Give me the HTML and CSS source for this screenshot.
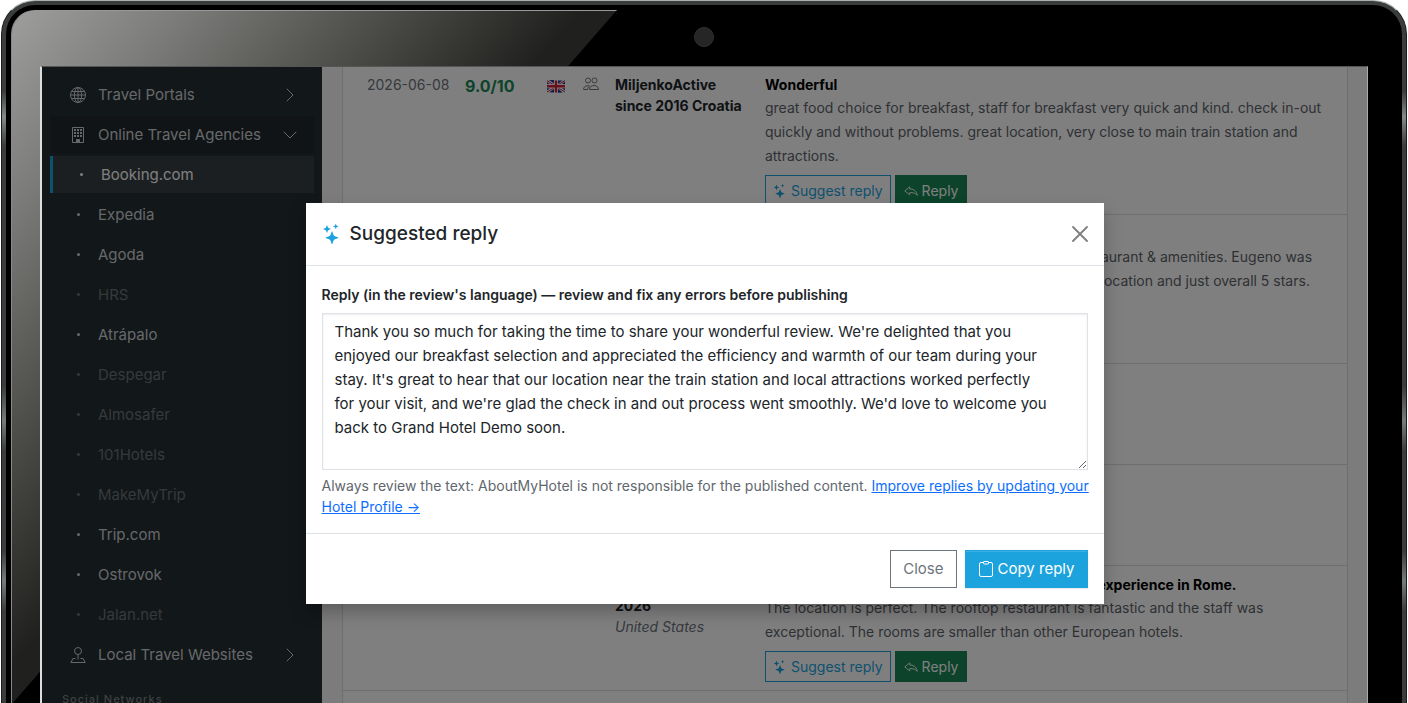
FILE: index.html
```html
<!DOCTYPE html>
<html lang="en">
<head>
<meta charset="utf-8">
<title>Suggested reply</title>
<link rel="stylesheet" href="styles.css">
</head>
<body>
<svg class="sprite" aria-hidden="true">
  <symbol id="stars" viewBox="0 0 16 16"><path fill="currentColor" d="M7.657 6.247c.11-.33.576-.33.686 0l.645 1.937a2.89 2.89 0 0 0 1.829 1.828l1.936.645c.33.11.33.576 0 .686l-1.937.645a2.89 2.89 0 0 0-1.828 1.829l-.645 1.936a.361.361 0 0 1-.686 0l-.645-1.937a2.89 2.89 0 0 0-1.828-1.828l-1.937-.645a.361.361 0 0 1 0-.686l1.937-.645a2.89 2.89 0 0 0 1.828-1.828zM3.794 1.148a.217.217 0 0 1 .412 0l.387 1.162c.173.518.579.924 1.097 1.097l1.162.387a.217.217 0 0 1 0 .412l-1.162.387A1.73 1.73 0 0 0 4.593 5.69l-.387 1.162a.217.217 0 0 1-.412 0L3.407 5.69A1.73 1.73 0 0 0 2.31 4.593l-1.162-.387a.217.217 0 0 1 0-.412l1.162-.387A1.73 1.73 0 0 0 3.407 2.31zM10.863.099a.145.145 0 0 1 .274 0l.258.774c.115.346.386.617.732.732l.774.258a.145.145 0 0 1 0 .274l-.774.258a1.16 1.16 0 0 0-.732.732l-.258.774a.145.145 0 0 1-.274 0l-.258-.774a1.16 1.16 0 0 0-.732-.732L9.1 2.137a.145.145 0 0 1 0-.274l.774-.258c.346-.115.617-.386.732-.732z"/></symbol>
  <symbol id="back" viewBox="0 0 16 16"><path fill="none" stroke="currentColor" stroke-linejoin="round" d="M6.6 3.2v2.6c3 0 7.400.6 8.600 7.200-2-2.600-5-3.400-8.600-3.200v2.600L.9 8z"/></symbol>
  <symbol id="right" viewBox="0 0 16 16"><path fill="none" stroke="currentColor" stroke-linecap="round" stroke-linejoin="round" d="M5 2l6 6-6 6"/></symbol>
  <symbol id="down" viewBox="0 0 16 16"><path fill="none" stroke="currentColor" stroke-linecap="round" stroke-linejoin="round" d="M2 5l6 6 6-6"/></symbol>
</svg>
<div class="tablet">
  <div class="bezel">
    <div class="gloss"></div>
    <div class="bezel-top"><span class="camera"></span></div>
    <div class="screen">
      <nav class="sidebar">
        <a class="item" href="#"><svg class="icon" viewBox="0 0 16 16"><g fill="none" stroke="currentColor"><circle cx="8" cy="8" r="7.500"/><ellipse cx="8" cy="8" rx="3.600" ry="7.500"/><path d="M8 .5v15M.5 8h15M1.600 4.500h12.800M1.600 11.500h12.800"/></g></svg><span class="label">Travel Portals</span><svg class="icon"><use href="#right"/></svg></a>
        <a class="item open" href="#"><svg class="icon" viewBox="0 0 16 16"><path fill="none" stroke="currentColor" d="M2.500.5h11v15h-11zM6.500 15.500v-3h3v3"/><path fill="currentColor" d="M4 2h2v2H4zM7 2h2v2H7zM10 2h2v2h-2zM4 5h2v2H4zM7 5h2v2H7zM10 5h2v2h-2zM4 8h2v2H4zM7 8h2v2H7zM10 8h2v2h-2zM6.500 12.500h3v3h-3z"/></svg><span class="label">Online Travel Agencies</span><svg class="icon"><use href="#down"/></svg></a>
        <a class="item active" href="#"><span class="dot"></span>Booking.com</a>
        <a class="item" href="#"><span class="dot"></span>Expedia</a>
        <a class="item" href="#"><span class="dot"></span>Agoda</a>
        <a class="item muted" href="#"><span class="dot"></span>HRS</a>
        <a class="item" href="#"><span class="dot"></span>Atrápalo</a>
        <a class="item muted" href="#"><span class="dot"></span>Despegar</a>
        <a class="item muted" href="#"><span class="dot"></span>Almosafer</a>
        <a class="item muted" href="#"><span class="dot"></span>101Hotels</a>
        <a class="item muted" href="#"><span class="dot"></span>MakeMyTrip</a>
        <a class="item" href="#"><span class="dot"></span>Trip.com</a>
        <a class="item" href="#"><span class="dot"></span>Ostrovok</a>
        <a class="item muted" href="#"><span class="dot"></span>Jalan.net</a>
        <a class="item" href="#"><svg class="icon" viewBox="0 0 16 16"><g fill="none" stroke="currentColor"><circle cx="8" cy="4" r="3.500"/><path d="M8 7.500v5M5.500 11.500H3L.8 15.500h14.400L13 11.500h-2.500"/></g></svg><span class="label">Local Travel Websites</span><svg class="icon"><use href="#right"/></svg></a>
        <div class="section">Social Networks</div>
      </nav>
      <main class="content">
        <table class="reviews">
          <colgroup><col class="c-date"><col class="c-score"><col class="c-flag"><col class="c-type"><col class="c-name"><col></colgroup>
          <tbody>
          <tr>
            <td class="date">2026-06-08</td>
            <td class="score">9.0/10</td>
            <td><svg class="flag" viewBox="0 0 20 16" role="img" aria-label="United Kingdom"><path fill="#fff" d="M1 2.500q4-1.500 9 0t9-.5v12q-4 1.500-9 .5t-9 0z"/><path fill="#1f3f94" d="M3 2l5 3.500V2zM12 2.600l4.500 0-4.500 3.200zM1 4l3 2.300H1zM19 3.600V6.300h-3.500zM1 10h3.200L1 12.500zM19 10v2.600L15.800 10zM8 14.400v-3.600l-4.800 3.400zM12 14.800v-4l4.800 3.800z"/><path stroke="#d2203a" d="M1 2.700l6.500 4M19 2.500l-6.500 4M1 14l6.500-4M19 14l-6.500-4"/><path stroke="#fff" stroke-width="4" d="M1 8.300h18M10 2.500v12"/><path stroke="#d2203a" stroke-width="2.400" d="M1 8.300h18M10 2.500v12"/></svg></td>
            <td><svg class="people" viewBox="0 0 16 16" role="img" aria-label="Couple"><g fill="none" stroke="currentColor"><circle cx="5" cy="4.500" r="2.500"/><circle cx="11.500" cy="4.500" r="2.500"/><path d="M6.500 13.500c0-2.500 2-4 4.500-4s4.500 1.500 4.500 4zM6.500 10C3 9 .5 11 .5 13.500h4.200c0-1.500.5-2.500 1.800-3.500"/></g></svg></td>
            <td class="name"><strong>MiljenkoActive since 2016 Croatia</strong></td>
            <td class="review"><h2>Wonderful</h2><p>great food choice for breakfast, staff for breakfast very quick and kind. check in-out quickly and without problems. great location, very close to main train station and attractions.</p>
              <div class="actions"><button class="btn-sm suggest"><svg><use href="#stars"/></svg>Suggest reply</button><button class="btn-sm reply"><svg><use href="#back"/></svg>Reply</button></div></td>
          </tr>
          <tr class="tall">
            <td></td><td></td><td></td><td></td><td></td>
            <td class="review"><h2>Five stars</h2><p class="keep-lines">Beautiful hotel and lovely rooms with a perfect restaurant &amp; amenities. Eugeno was<br>so helpful, friendly and welcoming to us. Excellent location and just overall 5 stars.</p></td>
          </tr>
          <tr class="short"><td></td><td></td><td></td><td></td><td></td><td></td></tr>
          <tr class="short"><td></td><td></td><td></td><td></td><td></td><td></td></tr>
          <tr>
            <td></td><td></td><td></td><td></td>
            <td class="name"><strong>Active since<br>2026</strong><br><em>United States</em></td>
            <td class="review"><h2>A truly wonderful hotel with a view and a superb experience in Rome.</h2><p>The location is perfect. The rooftop restaurant is fantastic and the staff was exceptional. The rooms are smaller than other European hotels.</p>
              <div class="actions"><button class="btn-sm suggest"><svg><use href="#stars"/></svg>Suggest reply</button><button class="btn-sm reply"><svg><use href="#back"/></svg>Reply</button></div></td>
          </tr>
          <tr class="short"><td></td><td></td><td></td><td></td><td></td><td></td></tr>
          </tbody>
        </table>
      </main>
      <div class="backdrop">
        <section class="modal" role="dialog" aria-labelledby="modal-title">
          <header class="modal-header">
            <svg class="spark"><use href="#stars"/></svg>
            <h1 id="modal-title">Suggested reply</h1>
            <button class="close" aria-label="Close dialog"><svg viewBox="0 0 16 16"><path fill="none" stroke="currentColor" stroke-width="1.800" stroke-linecap="round" d="M1 1l14 14M15 1L1 15"/></svg></button>
          </header>
          <div class="modal-body">
            <label for="reply-text">Reply (in the review's language) — review and fix any errors before publishing</label>
            <textarea id="reply-text">Thank you so much for taking the time to share your wonderful review. We're delighted that you
enjoyed our breakfast selection and appreciated the efficiency and warmth of our team during your
stay. It's great to hear that our location near the train station and local attractions worked perfectly
for your visit, and we're glad the check in and out process went smoothly. We'd love to welcome you
back to Grand Hotel Demo soon.</textarea>
            <p class="hint keep-lines">Always review the text: AboutMyHotel is not responsible for the published content. <a href="#">Improve replies by updating your<br>Hotel Profile →</a></p>
          </div>
          <footer class="modal-footer">
            <button class="btn outline">Close</button>
            <button class="btn primary"><svg viewBox="0 0 16 16"><g fill="none" stroke="currentColor"><path d="M5 1.500H3A1.500 1.500 0 0 0 1.500 3v11A1.500 1.500 0 0 0 3 15.500h10a1.500 1.500 0 0 0 1.500-1.500V3A1.500 1.500 0 0 0 13 1.500h-2"/><rect x="5.500" y=".5" width="5" height="2.500" rx=".5"/></g></svg>Copy reply</button>
          </footer>
        </section>
      </div>
    </div>
  </div>
</div>
</body>
</html>
```

FILE: styles.css
```css
* { box-sizing: border-box; }
body { margin: 0; background: #fff; font-family: Inter, "Liberation Sans", sans-serif; font-size: 14px; line-height: 21px; color: #212529; overflow: hidden; }
h1, h2, p { margin: 0; }
button, textarea { font-family: inherit; }
a { color: inherit; text-decoration: none; }
.sprite { display: none; }
.keep-lines { white-space: nowrap; }

.tablet { height: 100vh; margin: 0 1px; padding: 4px 4px 0; border: 1px solid #1c1f1e; border-top-color: #a9b2ad; border-bottom: 0; border-radius: 34px 34px 0 0; background: linear-gradient(#3a3d3c 0, #3a3d3c 90px, #858988 116px, #3a3d3c 145px, #3a3d3c 385px, #777b7a 420px, #3a3d3c 450px, #3a3d3c 550px, #777b7a 580px, #3a3d3c 610px); }
.bezel { position: relative; display: flex; flex-direction: column; height: 100%; padding: 0 34px; border-radius: 29px 29px 0 0; background: #000; overflow: hidden; }
.gloss { position: absolute; top: 5px; left: 5px; width: 606px; height: 695px; border-top: 1px solid #999; border-left: 1px solid #888; border-radius: 24px 0 0 0; background: linear-gradient(131deg, #9e9e9d 0, #7b7b79 130px, #4a4a47 290px, #20201e 430px); clip-path: polygon(0 0, 100% 0, 0 100%); }
.bezel-top { position: relative; display: flex; flex: none; align-items: center; justify-content: center; height: 61px; padding-top: 3px; }
.camera { width: 20px; height: 20px; border: 1px solid #303030; border-radius: 50%; background: #262626; }
.screen { position: relative; display: flex; flex: 1; min-height: 0; border: 1px solid #aaa; border-top-color: #555; border-left: 2px solid #ddd; border-bottom: 0; background: #f8f8f8; overflow: hidden; }

.sidebar { display: flex; flex: none; flex-direction: column; gap: 3px; width: 280px; padding: 9px 8px 0; background: #242e33; color: #ced1d3; font-size: 15px; }
.item { display: flex; flex: none; align-items: center; gap: 12px; height: 37px; padding: 0 16px 0 20px; }
.label { flex: 1; white-space: nowrap; }
.icon { flex: none; width: 16px; height: 16px; }
.open { background: #20292d; }
.active { border-left: 3px solid #1ca3de; background: #363f43; color: #fff; }
.muted { color: #6d7477; }
.dot { width: 3px; height: 3px; margin: 0 6px 0 7px; border-radius: 50%; background: currentColor; }
.section { padding: 13px 12px; color: #7d8386; font-size: 11px; font-weight: 500; letter-spacing: 1px; }

.content { flex: 1; min-width: 0; padding: 0 19px 0 20px; }
.reviews { width: 100%; table-layout: fixed; border-spacing: 0; border: solid #dcdcdc; border-width: 0 1px; background: #fff; }
.c-date { width: 114px; }
.c-score { width: 81px; }
.c-flag { width: 37px; }
.c-type { width: 32px; }
.c-name { width: 150px; }
.reviews td { padding: 8px 8px; border-bottom: 1px solid #dcdcdc; vertical-align: top; }
.reviews tr:first-child td { padding-top: 7px; }
.reviews .date { padding-right: 0; padding-left: 24px; color: #6c757d; white-space: nowrap; }
.reviews .score { color: #198754; font-size: 16px; font-weight: 700; line-height: 24px; }
.reviews .review { padding-right: 24px; }
.tall { height: 149px; }
.short { height: 101px; }
.flag { display: block; width: 20px; height: 20px; margin-top: 2px; }
.people { display: block; width: 16px; height: 16px; margin-top: 2px; color: #6c757d; }
.name em { color: #6c757d; }
.review h2 { color: #000; font-size: 14px; font-weight: 700; line-height: 22px; white-space: nowrap; }
.review p { color: #5d6369; line-height: 24px; }
.actions { display: flex; gap: 4px; margin-top: 7px; }
.btn-sm { display: flex; align-items: center; gap: 4px; height: 31px; padding: 0 8px; border: 1px solid; font-size: 14px; line-height: 21px; white-space: nowrap; }
.btn-sm svg { width: 14px; height: 14px; }
.suggest { padding: 0 7px; border-color: #1ca3de; background: transparent; color: #1ca3de; }
.reply { border-color: #198754; background: #198754; color: #fff; }

.backdrop { position: absolute; inset: 0; display: flex; align-items: flex-start; justify-content: center; padding: 136px 16px 0; background: rgba(0, 0, 0, .5); }
.modal { width: 100%; max-width: 798px; background: #fff; box-shadow: 0 8px 16px rgba(0, 0, 0, .25); }
.modal-header { display: flex; align-items: center; gap: 8px; padding: 16px; border-bottom: 1px solid #dee2e6; }
.modal-header h1 { flex: 1; font-size: 19px; font-weight: 500; line-height: 30px; }
.spark { width: 20px; height: 20px; color: #1ca3de; }
.close { display: flex; padding: 0; border: 0; background: none; color: #7f7f7f; }
.close svg { width: 16px; height: 16px; }
.modal-body { padding: 16px; }
.modal-body label { display: block; margin-bottom: 5px; font-size: 14px; font-weight: 600; line-height: 26px; }
.modal-body textarea { display: block; width: 100%; height: 157px; padding: 6px 12px; border: 1px solid #dee2e6; background: #fff; box-shadow: inset 0 1px 2px rgba(0, 0, 0, .08); color: #212529; font-size: 15px; line-height: 24px; resize: vertical; outline: 0; }
.hint { margin-top: 5px; color: #60676d; }
.hint a { color: #0d6efd; text-decoration: underline; }
.modal-footer { display: flex; justify-content: flex-end; gap: 8px; padding: 16px; border-top: 1px solid #dee2e6; }
.btn { display: flex; align-items: center; gap: 4px; height: 38px; padding: 0 12px; border: 1px solid; font-size: 15px; line-height: 24px; }
.btn svg { width: 16px; height: 16px; }
.outline { border-color: #6c757d; background: #fff; color: #6c757d; }
.primary { border-color: #1ca3de; background: #1ca3de; color: #fff; box-shadow: inset 0 1px 0 rgba(255, 255, 255, .15), 0 1px 1px rgba(0, 0, 0, .08); }
```
